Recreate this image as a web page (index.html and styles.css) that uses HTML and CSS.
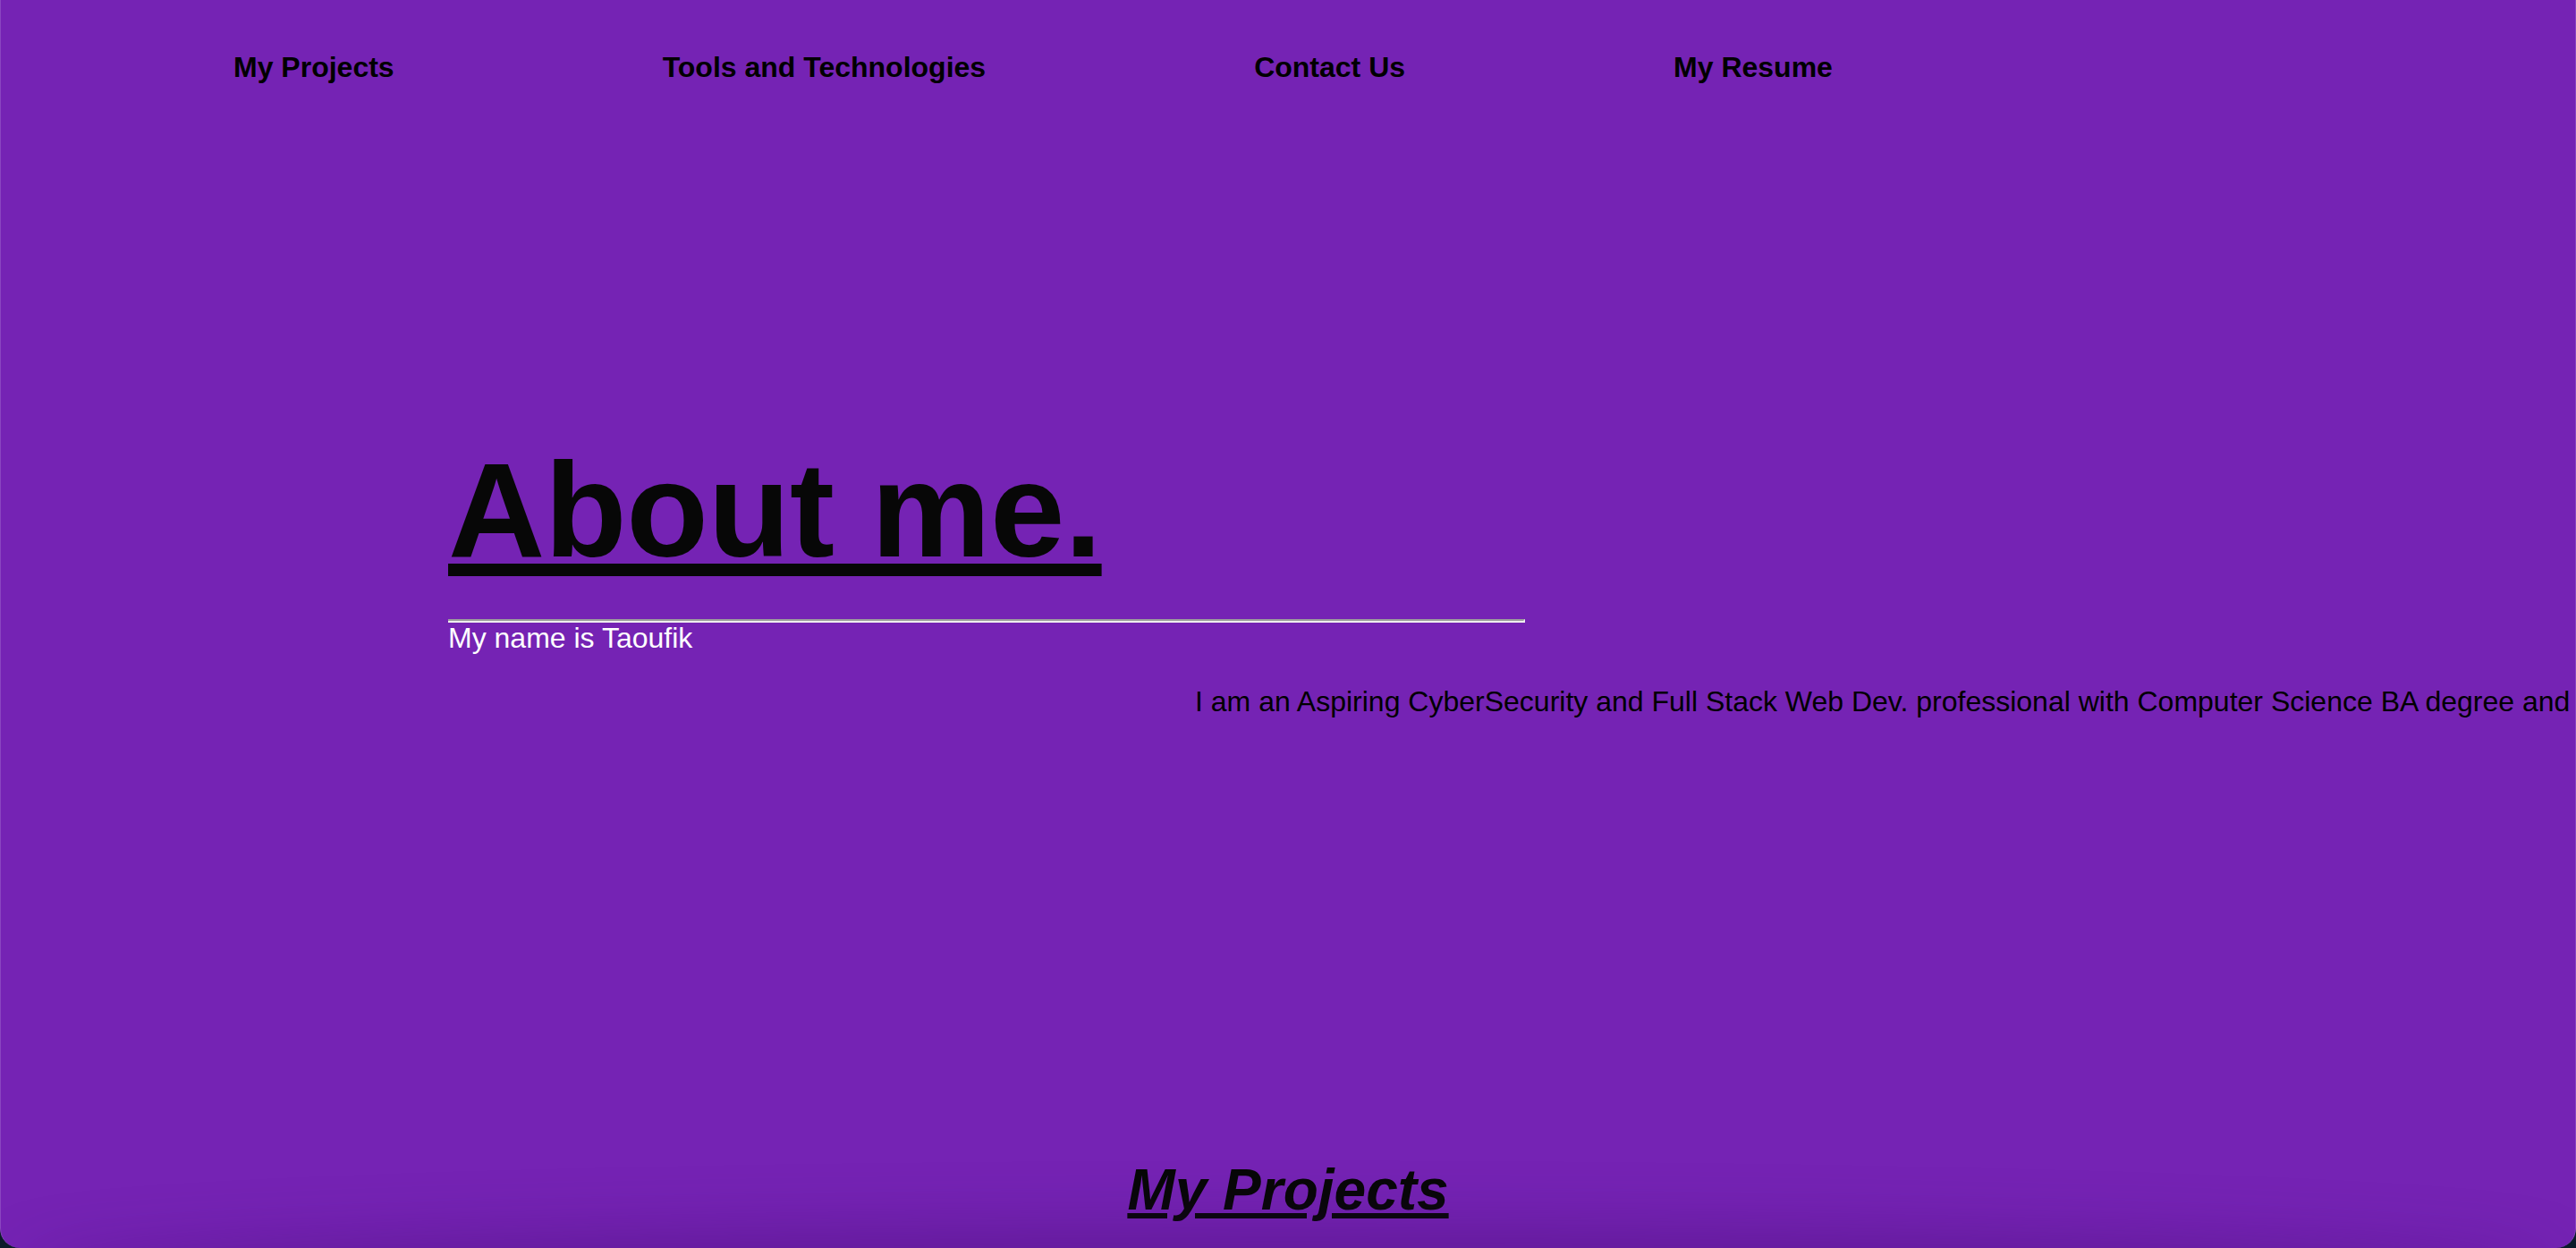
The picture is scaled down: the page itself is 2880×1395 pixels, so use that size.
FILE: index.html
```html
<!DOCTYPE html>
<html lang="en">
<head>
<meta charset="utf-8">
<title>Taoufik</title>
<link rel="stylesheet" href="styles.css">
</head>
<body>
<div class="frame">
  <nav class="nav">
    <ul class="nav-list">
      <li><a class="nav-link" href="#projects">My Projects</a></li>
      <li><a class="nav-link" href="#tools">Tools and Technologies</a></li>
      <li><a class="nav-link" href="#contact">Contact Us</a></li>
      <li><a class="nav-link" href="#resume">My Resume</a></li>
    </ul>
  </nav>
  <section class="about">
    <h1 class="about-title">About me.</h1>
    <hr class="rule">
    <p class="name">My name is Taoufik</p>
    <p class="bio">I am an Aspiring CyberSecurity and Full Stack Web Dev. professional with Computer Science BA degree and</p>
  </section>
  <h2 class="projects-title" id="projects">My Projects</h2>
  <div class="shade"></div>
</div>
</body>
</html>
```

FILE: styles.css
```css
html {
  background: #0c1b2a;
}
body {
  margin: 0;
  font-family: "Liberation Sans", Arial, Helvetica, sans-serif;
  overflow: hidden;
}
.frame {
  position: relative;
  height: 1395px;
  background: #7523b4;
  border-radius: 0 0 22px 22px;
  overflow: hidden;
  box-sizing: border-box;
  border-left: 1px solid #8a45c0;
  border-right: 1px solid #8a45c0;
}
.nav {
  padding: 57px 0 0 260px;
}
.nav-list {
  list-style: none;
  margin: 0;
  padding: 0;
  display: flex;
  gap: 300px;
}
.nav-link {
  color: #000;
  text-decoration: none;
  font-weight: bold;
  font-size: 32px;
  line-height: 37px;
  display: block;
}
.about {
  padding: 401px 0 0 500px;
}
.about-title {
  margin: 0;
  display: inline-block;
  font-size: 150px;
  line-height: 150px;
  font-weight: bold;
  color: #070707;
  text-decoration: underline;
  text-decoration-thickness: 14px;
  text-underline-offset: 8px;
  letter-spacing: -0.3px;
}
.rule {
  margin: 47px 0 0;
  width: 1204px;
  box-sizing: border-box;
  height: 4px;
  border: 0;
  border-top: 2px solid #9c9c9c;
  border-bottom: 2px solid #eeeeee;
  border-right: 2px solid #eeeeee;
}
.name {
  margin: 1px 0 0;
  font-size: 32px;
  line-height: 32px;
  color: #fff;
}
.bio {
  margin: 39px 0 0 835px;
  font-size: 32px;
  line-height: 32px;
  color: #000;
  white-space: nowrap;
}
.projects-title {
  margin: 493px 0 0;
  text-align: center;
  font-size: 64px;
  line-height: 74px;
  font-weight: bold;
  font-style: italic;
  color: #070707;
  text-decoration: underline;
}
.shade {
  position: absolute;
  left: 40px;
  right: 40px;
  bottom: -60px;
  height: 60px;
  border-radius: 50%;
  box-shadow: 0 0 70px 20px rgba(60, 10, 100, 0.35);
}
```
